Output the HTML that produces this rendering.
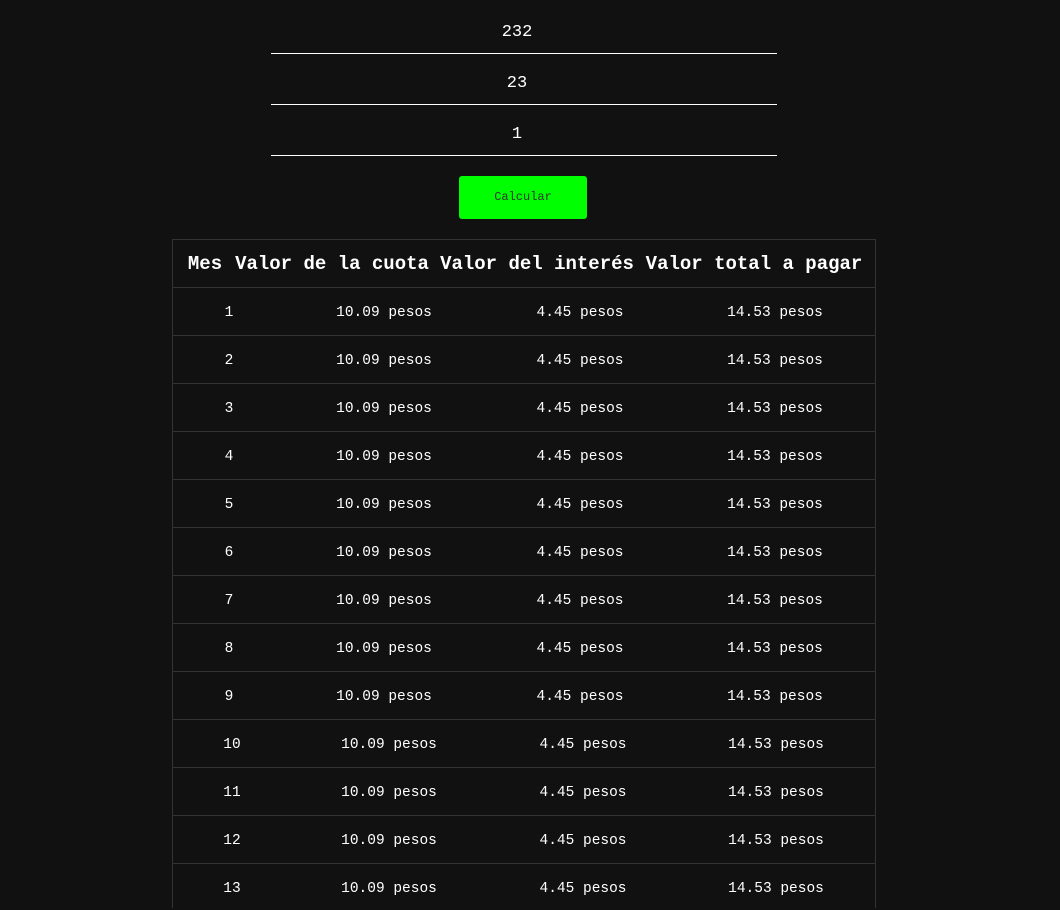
<!DOCTYPE html>
<html><head><meta charset="utf-8"><style>
html,body{margin:0;padding:0;background:#111;width:1060px;height:910px;overflow:hidden;font-family:"Liberation Mono",monospace;color:#fff}
.inp{position:absolute;left:271px;width:492px;padding-right:14px;height:50px;border-bottom:1px solid #fff;text-align:center;font-size:17px}
.btn{position:absolute;left:459px;top:176px;width:128px;height:43px;background:#00ff00;border-radius:3px;text-align:center;line-height:43px;font-size:12px;color:#333}
.tbl{position:absolute;left:172px;top:239px;width:702px;height:668px;border:1px solid #333;border-bottom:none;overflow:hidden}
.hd{position:absolute;top:0;left:0;width:702px;height:47px;border-bottom:1px solid #333;font-weight:bold;font-size:19px;line-height:49px}
.hd span,.r span{position:absolute;white-space:nowrap;transform:translateX(-50%)}
.r{position:absolute;left:0;width:702px;height:47px;border-bottom:1px solid #333;font-size:14.5px;line-height:50px}
</style></head><body>
<div class="inp" style="top:3px;line-height:60px">232</div>
<div class="inp" style="top:54px;line-height:60px">23</div>
<div class="inp" style="top:105px;line-height:60px">1</div>
<div class="btn">Calcular</div>
<div class="tbl">
<div class="hd"><span style="left:32px">Mes</span><span style="left:159px">Valor de la cuota</span><span style="left:364px">Valor del interés</span><span style="left:581px">Valor total a pagar</span></div>
<div class="r" style="top:48px"><span style="left:56px">1</span><span style="left:211px">10.09 pesos</span><span style="left:407px">4.45 pesos</span><span style="left:602px">14.53 pesos</span></div>
<div class="r" style="top:96px"><span style="left:56px">2</span><span style="left:211px">10.09 pesos</span><span style="left:407px">4.45 pesos</span><span style="left:602px">14.53 pesos</span></div>
<div class="r" style="top:144px"><span style="left:56px">3</span><span style="left:211px">10.09 pesos</span><span style="left:407px">4.45 pesos</span><span style="left:602px">14.53 pesos</span></div>
<div class="r" style="top:192px"><span style="left:56px">4</span><span style="left:211px">10.09 pesos</span><span style="left:407px">4.45 pesos</span><span style="left:602px">14.53 pesos</span></div>
<div class="r" style="top:240px"><span style="left:56px">5</span><span style="left:211px">10.09 pesos</span><span style="left:407px">4.45 pesos</span><span style="left:602px">14.53 pesos</span></div>
<div class="r" style="top:288px"><span style="left:56px">6</span><span style="left:211px">10.09 pesos</span><span style="left:407px">4.45 pesos</span><span style="left:602px">14.53 pesos</span></div>
<div class="r" style="top:336px"><span style="left:56px">7</span><span style="left:211px">10.09 pesos</span><span style="left:407px">4.45 pesos</span><span style="left:602px">14.53 pesos</span></div>
<div class="r" style="top:384px"><span style="left:56px">8</span><span style="left:211px">10.09 pesos</span><span style="left:407px">4.45 pesos</span><span style="left:602px">14.53 pesos</span></div>
<div class="r" style="top:432px"><span style="left:56px">9</span><span style="left:211px">10.09 pesos</span><span style="left:407px">4.45 pesos</span><span style="left:602px">14.53 pesos</span></div>
<div class="r" style="top:480px"><span style="left:59px">10</span><span style="left:216px">10.09 pesos</span><span style="left:410px">4.45 pesos</span><span style="left:603px">14.53 pesos</span></div>
<div class="r" style="top:528px"><span style="left:59px">11</span><span style="left:216px">10.09 pesos</span><span style="left:410px">4.45 pesos</span><span style="left:603px">14.53 pesos</span></div>
<div class="r" style="top:576px"><span style="left:59px">12</span><span style="left:216px">10.09 pesos</span><span style="left:410px">4.45 pesos</span><span style="left:603px">14.53 pesos</span></div>
<div class="r" style="top:624px;border-bottom:none"><span style="left:59px">13</span><span style="left:216px">10.09 pesos</span><span style="left:410px">4.45 pesos</span><span style="left:603px">14.53 pesos</span></div>
</div>
</body></html>
